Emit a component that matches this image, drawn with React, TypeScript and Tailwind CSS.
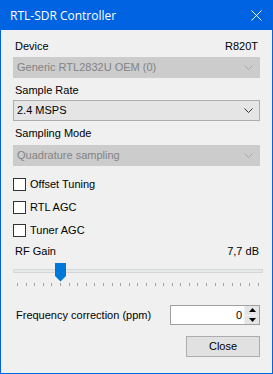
import React from 'react';

const Chevron = ({ color }: { color: string }) => (
  <svg width="9" height="5" viewBox="0 0 9 5" className="shrink-0">
    <path d="M0.5 0.5 L4.5 4.5 L8.5 0.5" fill="none" stroke={color} strokeWidth="1" />
  </svg>
);

interface ComboProps {
  value: string;
  disabled?: boolean;
}

const Combo: React.FC<ComboProps> = ({ value, disabled }) => (
  <div
    className={
      disabled
        ? 'h-[21px] flex items-center justify-between pl-[3px] pr-[6px] border border-[#cccccc] bg-[#cccccc] text-[#838383]'
        : 'h-[21px] flex items-center justify-between pl-[3px] pr-[6px] border border-[#adadad] bg-[#e5e5e5] text-black'
    }
  >
    <span>{value}</span>
    <Chevron color={disabled ? '#a8a8a8' : '#333333'} />
  </div>
);

const Check = ({ label }: { label: string }) => (
  <div className="flex items-center h-[13px]">
    <div className="w-[13px] h-[13px] border border-[#333333] bg-white" />
    <span className="ml-[4px]">{label}</span>
  </div>
);

const App: React.FC = () => {
  const ticks = Array.from({ length: 29 }, (_, i) => i);
  return (
    <div
      className="w-[273px] h-[374px] bg-[#0063e1] flex flex-col text-[11px] leading-[13px]"
      style={{ fontFamily: '"Liberation Sans", Arial, sans-serif' }}
    >
      <div className="h-[30px] flex items-center justify-between pl-[10px] pr-[11px] text-white">
        <span className="text-[12px]" style={{ fontFamily: '"Open Sans", "Noto Sans", sans-serif' }}>
          RTL-SDR Controller
        </span>
        <svg width="11" height="11" viewBox="0 0 11 11">
          <path d="M0.5 0.5 L10.5 10.5 M10.5 0.5 L0.5 10.5" stroke="white" strokeWidth="1" />
        </svg>
      </div>
      <div className="flex-1 mx-[1px] mb-[1px] bg-[#f0f0f0] px-[12px] pt-[10px] flex flex-col text-black">
        <div className="flex justify-between pl-[2px] pr-[2px]">
          <span>Device</span>
          <span>R820T</span>
        </div>
        <div className="mt-[4px]">
          <Combo value="Generic RTL2832U OEM (0)" disabled />
        </div>
        <div className="mt-[6px] pl-[2px]">Sample Rate</div>
        <div className="mt-[3px]">
          <Combo value="2.4 MSPS" />
        </div>
        <div className="mt-[6px] pl-[2px]">Sampling Mode</div>
        <div className="mt-[5px]">
          <Combo value="Quadrature sampling" disabled />
        </div>
        <div className="mt-[12px] flex flex-col gap-[10px]">
          <Check label="Offset Tuning" />
          <Check label="RTL AGC" />
          <Check label="Tuner AGC" />
        </div>
        <div className="mt-[8px] flex justify-between pl-[2px] pr-[1px]">
          <span>RF Gain</span>
          <span>7,7 dB</span>
        </div>
        <div className="relative h-[26px] mt-[1px]">
          <div className="absolute left-0 right-[-3px] top-[10px] h-[4px] bg-[#e7eaea] border border-[#d6d6d6]" />
          <svg className="absolute left-[42px] top-[4px]" width="11" height="19" viewBox="0 0 11 19">
            <path d="M0 0 H11 V13 L5.5 18.5 L0 13 Z" fill="#0078d7" />
          </svg>
          <div className="absolute left-[4px] top-[24px] w-[242px] flex justify-between">
            {ticks.map((t) => (
              <div key={t} className="w-[1px] h-[3px] bg-[#a0a0a0]" />
            ))}
          </div>
        </div>
        <div className="mt-[20px] flex items-center justify-between">
          <span className="pl-[3px]">Frequency correction (ppm)</span>
          <div className="w-[90px] h-[20px] border border-[#a0a0a0] bg-white flex">
            <div className="flex-1 flex items-center justify-end pr-[2px]">0</div>
            <div className="w-[15px] flex flex-col border-l border-[#f0f0f0]">
              <div className="flex-1 bg-[#e5e5e5] border-b border-[#f0f0f0] flex items-center justify-center">
                <svg width="7" height="4" viewBox="0 0 7 4">
                  <path d="M3.5 0 L7 4 H0 Z" fill="#000" />
                </svg>
              </div>
              <div className="flex-1 bg-[#e5e5e5] flex items-center justify-center">
                <svg width="7" height="4" viewBox="0 0 7 4">
                  <path d="M0 0 H7 L3.5 4 Z" fill="#000" />
                </svg>
              </div>
            </div>
          </div>
        </div>
        <div className="mt-[11px] flex justify-end">
          <button className="w-[74px] h-[21px] border border-[#adadad] bg-[#e1e1e1] text-black text-[11px] leading-[13px]">
            Close
          </button>
        </div>
      </div>
    </div>
  );
};

export default App;
